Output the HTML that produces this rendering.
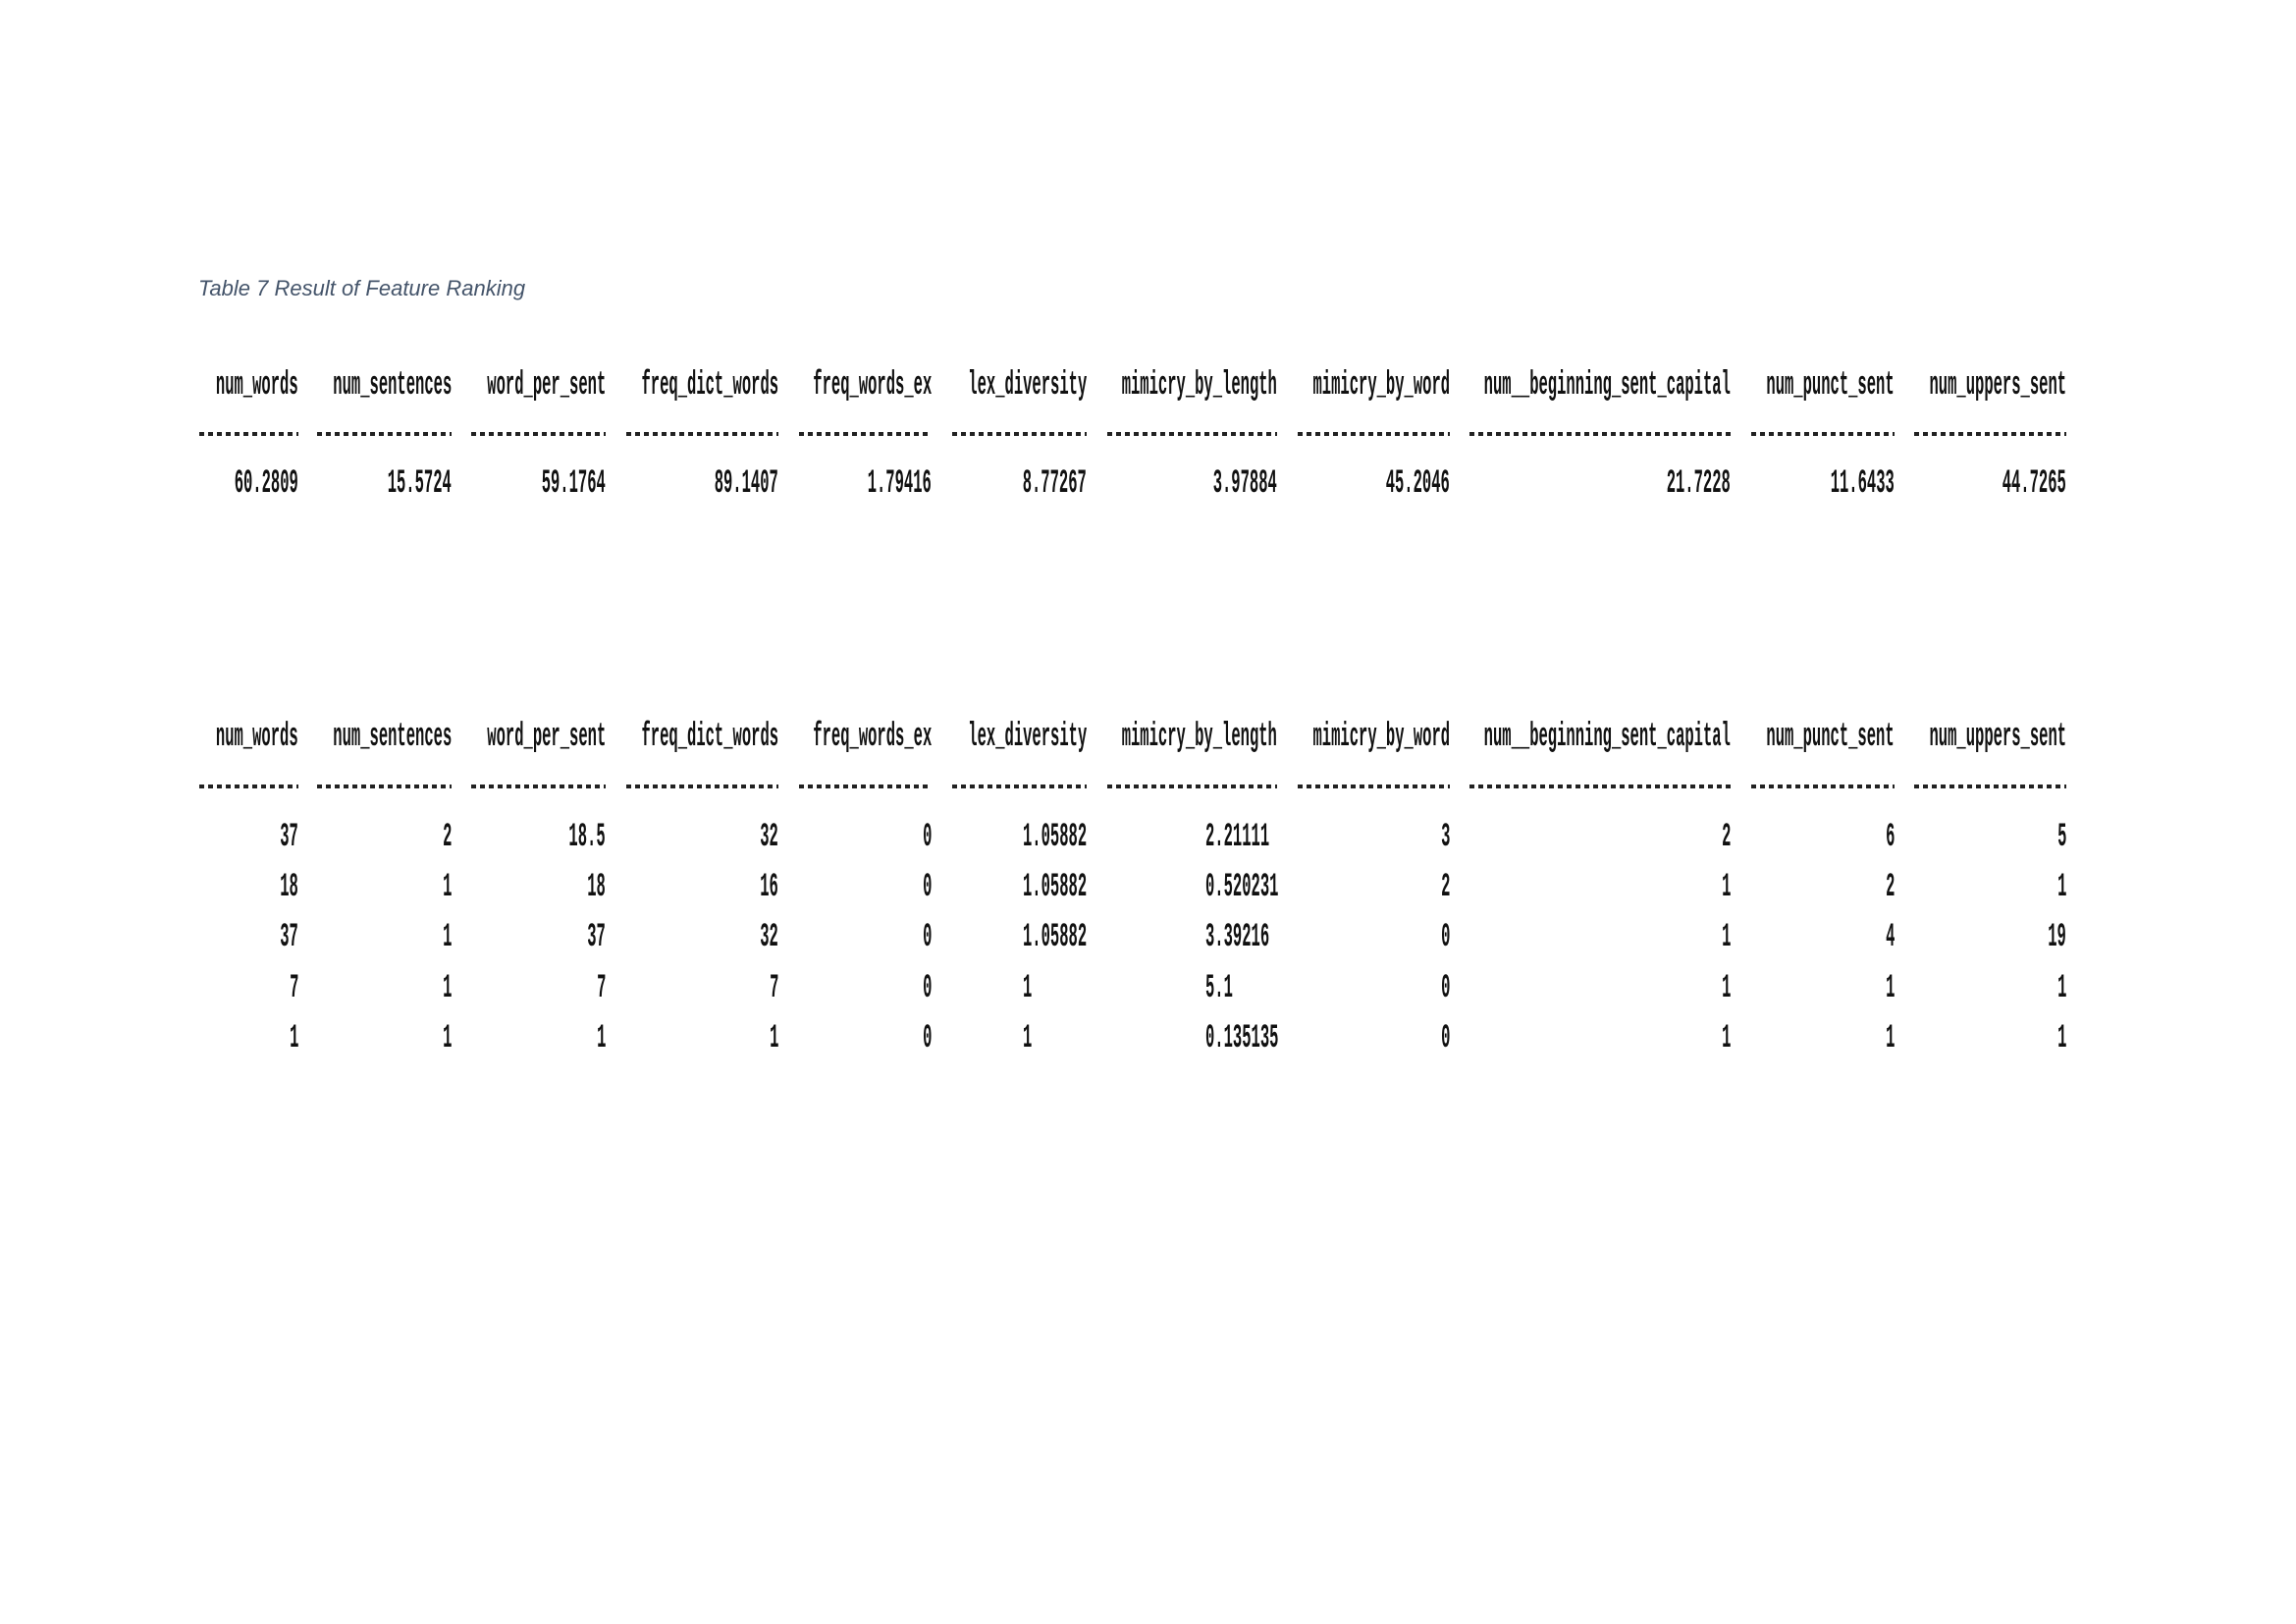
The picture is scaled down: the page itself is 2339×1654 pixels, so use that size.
<!DOCTYPE html>
<html><head><meta charset="utf-8">
<style>
html,body{margin:0;padding:0;background:#fff;}
body{width:2339px;height:1654px;position:relative;overflow:hidden;}
.cap{position:absolute;left:202px;top:281px;font-family:"Liberation Sans",sans-serif;font-style:italic;font-size:22px;color:#44546a;white-space:nowrap;}
.t{position:absolute;font-family:"Liberation Mono",monospace;font-weight:bold;font-size:34px;line-height:34px;color:#111;white-space:nowrap;transform:scaleX(0.456);}
.r{transform-origin:right center;}
.l{transform-origin:left center;}
.d{position:absolute;height:4px;background:repeating-linear-gradient(90deg,#222 0 5px,transparent 5px 9px);}
</style></head><body>
<div class="cap">Table 7 Result of Feature Ranking</div>

<div class="t r" style="right:2035px;top:376px">num_words</div>
<div class="t r" style="right:1879px;top:376px">num_sentences</div>
<div class="t r" style="right:1722px;top:376px">word_per_sent</div>
<div class="t r" style="right:1546px;top:376px">freq_dict_words</div>
<div class="t r" style="right:1390px;top:376px">freq_words_ex</div>
<div class="t r" style="right:1232px;top:376px">lex_diversity</div>
<div class="t r" style="right:1038px;top:376px">mimicry_by_length</div>
<div class="t r" style="right:862px;top:376px">mimicry_by_word</div>
<div class="t r" style="right:576px;top:376px">num__beginning_sent_capital</div>
<div class="t r" style="right:409px;top:376px">num_punct_sent</div>
<div class="t r" style="right:234px;top:376px">num_uppers_sent</div>

<div class="d" style="left:203px;width:101px;top:440px"></div>
<div class="d" style="left:323px;width:137px;top:440px"></div>
<div class="d" style="left:480px;width:137px;top:440px"></div>
<div class="d" style="left:638px;width:155px;top:440px"></div>
<div class="d" style="left:814px;width:135px;top:440px"></div>
<div class="d" style="left:970px;width:137px;top:440px"></div>
<div class="d" style="left:1128px;width:173px;top:440px"></div>
<div class="d" style="left:1322px;width:155px;top:440px"></div>
<div class="d" style="left:1497px;width:266px;top:440px"></div>
<div class="d" style="left:1784px;width:146px;top:440px"></div>
<div class="d" style="left:1950px;width:155px;top:440px"></div>

<div class="t r" style="right:2035px;top:476px">60.2809</div>
<div class="t r" style="right:1879px;top:476px">15.5724</div>
<div class="t r" style="right:1722px;top:476px">59.1764</div>
<div class="t r" style="right:1546px;top:476px">89.1407</div>
<div class="t r" style="right:1390px;top:476px">1.79416</div>
<div class="t r" style="right:1232px;top:476px">8.77267</div>
<div class="t r" style="right:1038px;top:476px">3.97884</div>
<div class="t r" style="right:862px;top:476px">45.2046</div>
<div class="t r" style="right:576px;top:476px">21.7228</div>
<div class="t r" style="right:409px;top:476px">11.6433</div>
<div class="t r" style="right:234px;top:476px">44.7265</div>

<div class="t r" style="right:2035px;top:734px">num_words</div>
<div class="t r" style="right:1879px;top:734px">num_sentences</div>
<div class="t r" style="right:1722px;top:734px">word_per_sent</div>
<div class="t r" style="right:1546px;top:734px">freq_dict_words</div>
<div class="t r" style="right:1390px;top:734px">freq_words_ex</div>
<div class="t r" style="right:1232px;top:734px">lex_diversity</div>
<div class="t r" style="right:1038px;top:734px">mimicry_by_length</div>
<div class="t r" style="right:862px;top:734px">mimicry_by_word</div>
<div class="t r" style="right:576px;top:734px">num__beginning_sent_capital</div>
<div class="t r" style="right:409px;top:734px">num_punct_sent</div>
<div class="t r" style="right:234px;top:734px">num_uppers_sent</div>

<div class="d" style="left:203px;width:101px;top:799px"></div>
<div class="d" style="left:323px;width:137px;top:799px"></div>
<div class="d" style="left:480px;width:137px;top:799px"></div>
<div class="d" style="left:638px;width:155px;top:799px"></div>
<div class="d" style="left:814px;width:135px;top:799px"></div>
<div class="d" style="left:970px;width:137px;top:799px"></div>
<div class="d" style="left:1128px;width:173px;top:799px"></div>
<div class="d" style="left:1322px;width:155px;top:799px"></div>
<div class="d" style="left:1497px;width:266px;top:799px"></div>
<div class="d" style="left:1784px;width:146px;top:799px"></div>
<div class="d" style="left:1950px;width:155px;top:799px"></div>

<div class="t r" style="right:2035px;top:836px">37</div>
<div class="t r" style="right:1879px;top:836px">2</div>
<div class="t r" style="right:1722px;top:836px">18.5</div>
<div class="t r" style="right:1546px;top:836px">32</div>
<div class="t r" style="right:1390px;top:836px">0</div>
<div class="t l" style="left:1042px;top:836px">1.05882</div>
<div class="t l" style="left:1228px;top:836px">2.21111</div>
<div class="t r" style="right:862px;top:836px">3</div>
<div class="t r" style="right:576px;top:836px">2</div>
<div class="t r" style="right:409px;top:836px">6</div>
<div class="t r" style="right:234px;top:836px">5</div>

<div class="t r" style="right:2035px;top:887px">18</div>
<div class="t r" style="right:1879px;top:887px">1</div>
<div class="t r" style="right:1722px;top:887px">18</div>
<div class="t r" style="right:1546px;top:887px">16</div>
<div class="t r" style="right:1390px;top:887px">0</div>
<div class="t l" style="left:1042px;top:887px">1.05882</div>
<div class="t l" style="left:1228px;top:887px">0.520231</div>
<div class="t r" style="right:862px;top:887px">2</div>
<div class="t r" style="right:576px;top:887px">1</div>
<div class="t r" style="right:409px;top:887px">2</div>
<div class="t r" style="right:234px;top:887px">1</div>

<div class="t r" style="right:2035px;top:938px">37</div>
<div class="t r" style="right:1879px;top:938px">1</div>
<div class="t r" style="right:1722px;top:938px">37</div>
<div class="t r" style="right:1546px;top:938px">32</div>
<div class="t r" style="right:1390px;top:938px">0</div>
<div class="t l" style="left:1042px;top:938px">1.05882</div>
<div class="t l" style="left:1228px;top:938px">3.39216</div>
<div class="t r" style="right:862px;top:938px">0</div>
<div class="t r" style="right:576px;top:938px">1</div>
<div class="t r" style="right:409px;top:938px">4</div>
<div class="t r" style="right:234px;top:938px">19</div>

<div class="t r" style="right:2035px;top:990px">7</div>
<div class="t r" style="right:1879px;top:990px">1</div>
<div class="t r" style="right:1722px;top:990px">7</div>
<div class="t r" style="right:1546px;top:990px">7</div>
<div class="t r" style="right:1390px;top:990px">0</div>
<div class="t l" style="left:1042px;top:990px">1</div>
<div class="t l" style="left:1228px;top:990px">5.1</div>
<div class="t r" style="right:862px;top:990px">0</div>
<div class="t r" style="right:576px;top:990px">1</div>
<div class="t r" style="right:409px;top:990px">1</div>
<div class="t r" style="right:234px;top:990px">1</div>

<div class="t r" style="right:2035px;top:1041px">1</div>
<div class="t r" style="right:1879px;top:1041px">1</div>
<div class="t r" style="right:1722px;top:1041px">1</div>
<div class="t r" style="right:1546px;top:1041px">1</div>
<div class="t r" style="right:1390px;top:1041px">0</div>
<div class="t l" style="left:1042px;top:1041px">1</div>
<div class="t l" style="left:1228px;top:1041px">0.135135</div>
<div class="t r" style="right:862px;top:1041px">0</div>
<div class="t r" style="right:576px;top:1041px">1</div>
<div class="t r" style="right:409px;top:1041px">1</div>
<div class="t r" style="right:234px;top:1041px">1</div>
</body></html>
